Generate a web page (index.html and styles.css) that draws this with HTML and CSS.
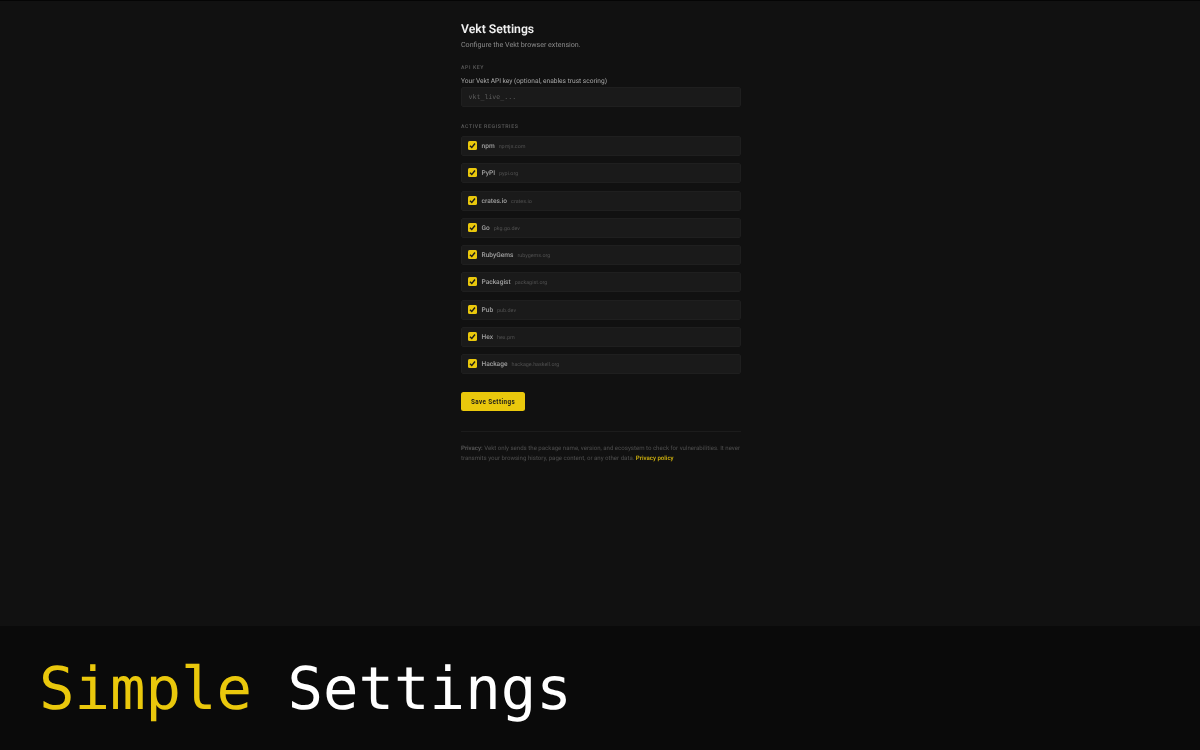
FILE: index.html
```html
<!DOCTYPE html>
<html lang="en">

<head>
  <meta charset="UTF-8" />
  <title>Vekt Settings</title>
  <link rel="stylesheet" href="styles.css">
</head>

<body>
  <div class="main">
    <div class="settings">
      <h1>Vekt Settings</h1>
      <p class="subtitle">Configure the Vekt browser extension.</p>

      <h2 class="section-title">API KEY</h2>
      <label class="field-label" for="apiKey">Your Vekt API key (optional, enables trust scoring)</label>
      <input class="api-input" id="apiKey" type="text" placeholder="vkt_live_...">

      <h2 class="section-title registries-title">ACTIVE REGISTRIES</h2>
      <div class="registry-list">
        <div class="registry"><span class="check"><svg viewBox="0 0 10 10"><path d="M2.2 5.2 4.2 7.2 7.8 2.8"/></svg></span><strong>npm</strong><small>npmjs.com</small></div>
        <div class="registry"><span class="check"><svg viewBox="0 0 10 10"><path d="M2.2 5.2 4.2 7.2 7.8 2.8"/></svg></span><strong>PyPI</strong><small>pypi.org</small></div>
        <div class="registry"><span class="check"><svg viewBox="0 0 10 10"><path d="M2.2 5.2 4.2 7.2 7.8 2.8"/></svg></span><strong>crates.io</strong><small>crates.io</small></div>
        <div class="registry"><span class="check"><svg viewBox="0 0 10 10"><path d="M2.2 5.2 4.2 7.2 7.8 2.8"/></svg></span><strong>Go</strong><small>pkg.go.dev</small></div>
        <div class="registry"><span class="check"><svg viewBox="0 0 10 10"><path d="M2.2 5.2 4.2 7.2 7.8 2.8"/></svg></span><strong>RubyGems</strong><small>rubygems.org</small></div>
        <div class="registry"><span class="check"><svg viewBox="0 0 10 10"><path d="M2.2 5.2 4.2 7.2 7.8 2.8"/></svg></span><strong>Packagist</strong><small>packagist.org</small></div>
        <div class="registry"><span class="check"><svg viewBox="0 0 10 10"><path d="M2.2 5.2 4.2 7.2 7.8 2.8"/></svg></span><strong>Pub</strong><small>pub.dev</small></div>
        <div class="registry"><span class="check"><svg viewBox="0 0 10 10"><path d="M2.2 5.2 4.2 7.2 7.8 2.8"/></svg></span><strong>Hex</strong><small>hex.pm</small></div>
        <div class="registry"><span class="check"><svg viewBox="0 0 10 10"><path d="M2.2 5.2 4.2 7.2 7.8 2.8"/></svg></span><strong>Hackage</strong><small>hackage.haskell.org</small></div>
      </div>

      <button class="save-btn">Save Settings</button>

      <div class="privacy">
        <b>Privacy:</b> Vekt only sends the package name, version, and ecosystem to check for vulnerabilities. It never
        transmits your browsing history, page content, or any other data. <a href="#">Privacy policy</a>
      </div>
    </div>
  </div>

  <div class="caption"><span class="accent">Simple</span> Settings</div>
</body>

</html>
```

FILE: styles.css
```css
* {
  box-sizing: border-box;
  margin: 0;
  padding: 0;
}

body {
  background-color: #111111;
  color: #e5e5e5;
  font-family: Roboto, sans-serif;
  text-rendering: geometricPrecision;
  display: flex;
  flex-direction: column;
  height: 750px;
  overflow: hidden;
}

.main {
  flex: 1;
  border-top: 1px solid #050505;
  display: flex;
  justify-content: center;
  padding-left: 2px;
}

/* the reference is a scaled-down capture, so the small text is soft */
.settings {
  width: 280px;
  padding-top: 20px;
  filter: blur(0.35px);
}

h1 {
  font-size: 12.2px;
  line-height: 16px;
  font-weight: 600;
  color: #f0f0f0;
}

.subtitle {
  font-size: 7.1px;
  line-height: 10px;
  margin-top: 3px;
  color: #8a8a8a;
}

.section-title {
  font-size: 5.2px;
  line-height: 7px;
  font-weight: 500;
  letter-spacing: 0.6px;
  color: #5c5c5c;
  margin-top: 14.5px;
}

.registries-title {
  margin-top: 17px;
}

.field-label {
  display: block;
  font-size: 6.6px;
  line-height: 10px;
  margin-top: 4.5px;
  color: #a8a8a8;
}

.api-input {
  display: block;
  width: 100%;
  height: 20px;
  margin-top: 1px;
  padding: 0 6.5px;
  background: #1a1a1a;
  border: 1px solid #1f1f1f;
  border-radius: 2px;
  font-family: "DejaVu Sans Mono", monospace;
  font-size: 6.6px;
  color: #e5e5e5;
}

.api-input::placeholder {
  color: #5f5f5f;
}

.registry-list {
  display: flex;
  flex-direction: column;
  gap: 7.3px;
  margin-top: 5px;
}

.registry {
  display: flex;
  align-items: center;
  height: 20px;
  padding-left: 6px;
  background: #1a1a1a;
  border: 1px solid #1f1f1f;
  border-radius: 2px;
}

.check {
  display: flex;
  width: 9px;
  height: 9px;
  margin-right: 4.5px;
  margin-bottom: 1px;
  background: #eac80c;
  border-radius: 1.5px;
}

.check svg {
  width: 9px;
  height: 9px;
  fill: none;
  stroke: #1a1a1a;
  stroke-width: 1.5;
}

.registry strong {
  font-size: 6.6px;
  font-weight: 500;
  color: #a0a0a0;
}

.registry small {
  font-size: 5.4px;
  margin-left: 4px;
  margin-top: 2px;
  color: #505050;
}

.save-btn {
  display: block;
  width: 64px;
  height: 19px;
  margin-top: 18px;
  background: #eac80c;
  border: none;
  border-radius: 2.5px;
  font-family: Roboto, sans-serif;
  font-size: 6.3px;
  font-weight: 700;
  letter-spacing: 0.4px;
  color: #1a1a1a;
}

.privacy {
  margin-top: 20px;
  padding-top: 12px;
  border-top: 1px solid #1c1c1c;
  font-size: 6.1px;
  line-height: 10px;
  color: #4e4e4e;
}

.privacy b {
  font-weight: 500;
  color: #5c5c5c;
}

.privacy a {
  color: #d8b90e;
  font-weight: 500;
  text-decoration: none;
}

.caption {
  height: 124px;
  flex-shrink: 0;
  display: flex;
  align-items: center;
  gap: 0.6em;
  padding-left: 39px;
  background: #0a0a0a;
  color: #fff;
  font-family: "DejaVu Sans Mono", monospace;
  font-size: 59px;
}

.accent {
  color: #eac80c;
}
```
